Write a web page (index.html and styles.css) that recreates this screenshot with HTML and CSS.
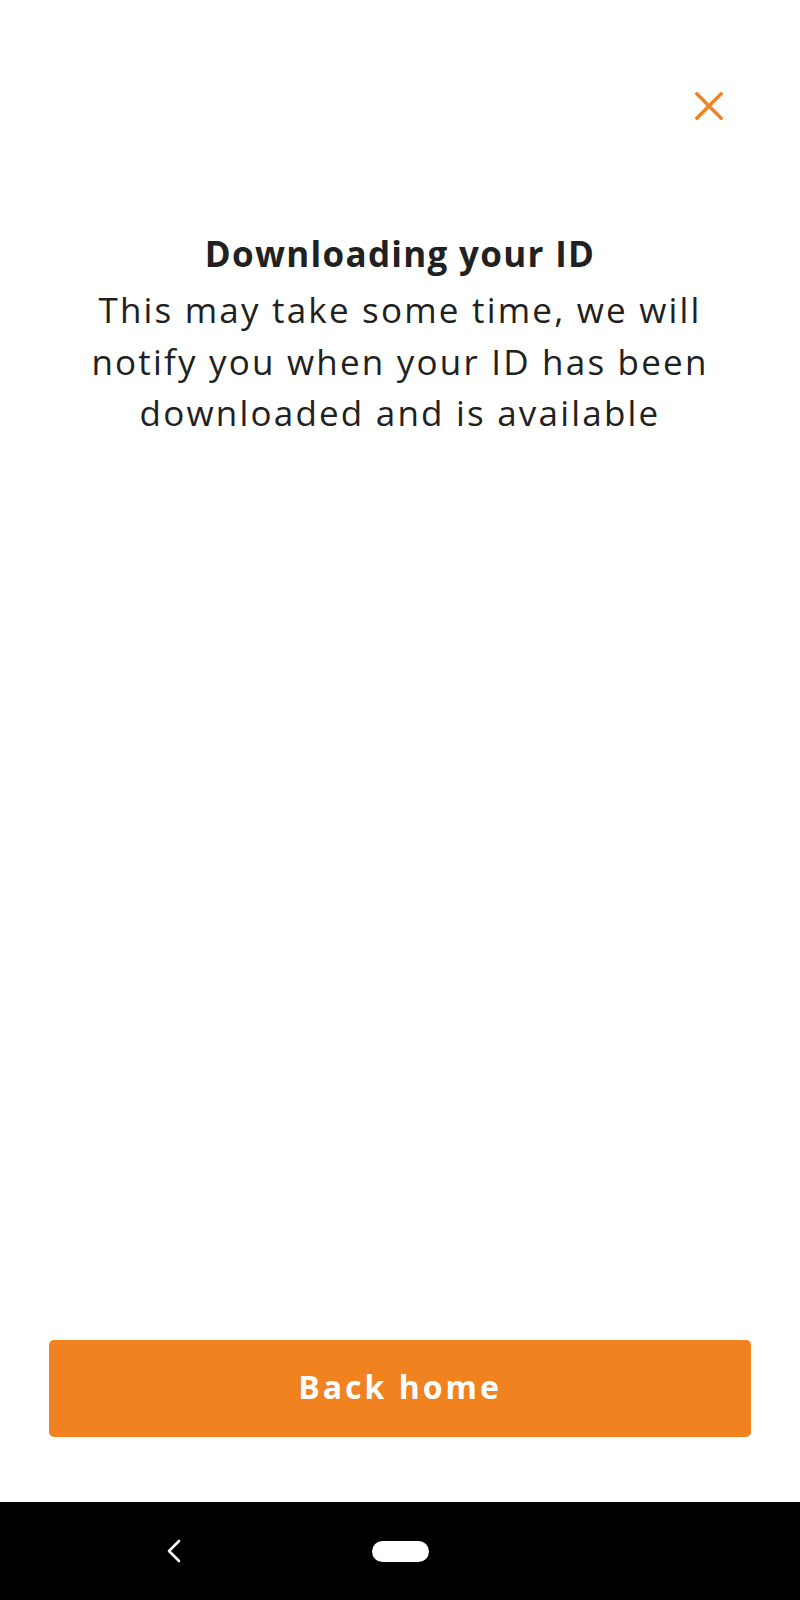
FILE: index.html
```html
<!DOCTYPE html>
<html lang="en">
<head>
<meta charset="utf-8">
<title>Downloading your ID</title>
<link rel="stylesheet" href="styles.css">
</head>
<body>
<div class="screen">
  <header class="topbar">
    <button class="close" aria-label="Close">
      <svg width="28" height="28" viewBox="0 0 28 28"><path d="M1.8 1.8 L26.2 26.2 M26.2 1.8 L1.8 26.2" stroke="#F0821F" stroke-width="3.4" stroke-linecap="round" fill="none"/></svg>
    </button>
  </header>
  <main class="content">
    <h1 class="title">Downloading your ID</h1>
    <p class="message">This may take some time, we will notify you when your ID has been downloaded and is available</p>
  </main>
  <div class="actions">
    <button class="primary">Back home</button>
  </div>
  <nav class="navbar">
    <svg class="back" width="16" height="24" viewBox="0 0 16 24"><path d="M13 2 L3 12 L13 22" stroke="#fff" stroke-width="2.6" stroke-linecap="round" stroke-linejoin="round" fill="none"/></svg>
    <span class="home"></span>
  </nav>
</div>
</body>
</html>
```

FILE: styles.css
```css
* { box-sizing: border-box; }
html, body { margin: 0; padding: 0; background: #fff; }
body { font-family: "Open Sans", "Liberation Sans", sans-serif; color: #212121; }

.screen {
  width: 800px;
  height: 1600px;
  display: flex;
  flex-direction: column;
}

.topbar {
  display: flex;
  justify-content: flex-end;
  padding: 92px 77px 0 0;
  height: 228px;
}
.close {
  border: 0;
  background: none;
  padding: 0;
  width: 28px;
  height: 28px;
  display: block;
}
.close svg { display: block; }

.content {
  flex: 1;
  text-align: center;
  padding: 0 80px;
}
.title {
  margin: 0;
  font-size: 35px;
  line-height: 52px;
  font-weight: 700;
  letter-spacing: 1.3px;
}
.message {
  margin: 4px 0 0;
  font-size: 35px;
  line-height: 51.5px;
  font-weight: 400;
  letter-spacing: 2.2px;
}

.actions {
  padding: 0 49px 65px;
}
.primary {
  display: block;
  width: 100%;
  height: 97px;
  border: 0;
  border-radius: 5px;
  background: #F0821F;
  color: #fff;
  font-family: "Open Sans", "Liberation Sans", sans-serif;
  font-size: 32px;
  font-weight: 700;
  letter-spacing: 3px;
  padding: 0 0 4px;
}

.navbar {
  height: 98px;
  background: #000;
  display: flex;
  align-items: center;
  padding-left: 166px;
  gap: 190px;
}
.back { display: block; }
.home {
  display: block;
  width: 57px;
  height: 21px;
  border-radius: 11px;
  background: #fff;
}
```
